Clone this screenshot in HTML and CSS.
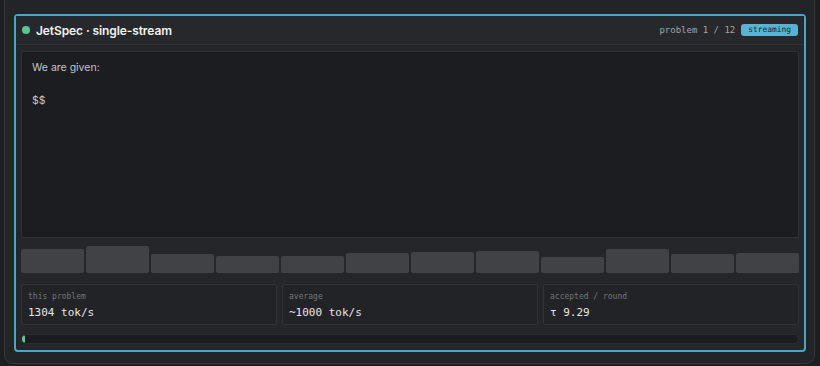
FILE: index.html
```html
<!DOCTYPE html>
<html>
<head>
<meta charset="utf-8">
<link rel="stylesheet" href="styles.css">
</head>
<body>
<div class="panel">
  <div class="card">
    <div class="card-head">
      <div class="title-wrap">
        <span class="dot"></span>
        <span class="title">JetSpec · single-stream</span>
      </div>
      <div class="meta">
        <span class="counter">problem 1 / 12</span>
        <span class="badge">streaming</span>
      </div>
    </div>
    <div class="card-body">
      <div class="output">We are given:

$$</div>
      <div class="bars">
        <div class="bar" style="height:24px"></div>
        <div class="bar" style="height:27px"></div>
        <div class="bar" style="height:19px"></div>
        <div class="bar" style="height:17px"></div>
        <div class="bar" style="height:17px"></div>
        <div class="bar" style="height:20px"></div>
        <div class="bar" style="height:21px"></div>
        <div class="bar" style="height:22px"></div>
        <div class="bar" style="height:16px"></div>
        <div class="bar" style="height:24px"></div>
        <div class="bar" style="height:19px"></div>
        <div class="bar" style="height:20px"></div>
      </div>
      <div class="stats">
        <div class="stat">
          <div class="stat-label">this problem</div>
          <div class="stat-value">1304 tok/s</div>
        </div>
        <div class="stat">
          <div class="stat-label">average</div>
          <div class="stat-value">~1000 tok/s</div>
        </div>
        <div class="stat">
          <div class="stat-label">accepted / round</div>
          <div class="stat-value">τ 9.29</div>
        </div>
      </div>
      <div class="progress"><div class="progress-fill" style="width:0.3%"></div></div>
    </div>
  </div>
</div>
</body>
</html>
```
FILE: styles.css
```css
* { box-sizing: border-box; }
html, body { margin: 0; padding: 0; }
body {
  background: #1d1e21;
  width: 820px;
  height: 366px;
  overflow: hidden;
  font-family: Inter, "Liberation Sans", sans-serif;
}
.panel {
  margin: -10px 5px 0 4px;
  background: #232428;
  border: 1px solid #37383c;
  border-radius: 9px;
  padding: 23px 8px 11px 9px;
}
.card {
  background: #25262a;
  border: 2px solid #4aa6c9;
  border-radius: 4px;
  display: flex;
  flex-direction: column;
}
.card-head {
  height: 29px;
  background: #27282c;
  border-bottom: 1px solid #323337;
  display: flex;
  align-items: center;
  justify-content: space-between;
  padding: 0 6px 0 6px;
}
.title-wrap { display: flex; align-items: center; gap: 6px; }
.dot {
  width: 8px; height: 8px; border-radius: 50%;
  background: #5cc592;
}
.title {
  color: #f2f2f2;
  font-weight: 600;
  font-size: 12px;
  letter-spacing: -0.1px;
}
.meta { display: flex; align-items: center; gap: 6px; }
.counter {
  font-family: "DejaVu Sans Mono", monospace;
  font-size: 9px;
  color: #a3a4a7;
}
.badge {
  font-family: "DejaVu Sans Mono", monospace;
  font-size: 7.9px;
  color: #15232b;
  background: #58b3d5;
  border-radius: 3px;
  height: 12px;
  line-height: 12px;
  padding: 0 7px;
}
.card-body {
  padding: 6px 5px 6px 5px;
  display: flex;
  flex-direction: column;
}
.output {
  height: 187px;
  background: #1c1d20;
  border: 1px solid #2f3034;
  border-radius: 2px;
  padding: 8px 10px;
  white-space: pre-wrap;
  color: #c4c4c6;
  font-size: 10.5px;
  line-height: 16.5px;
}
.bars {
  margin-top: 7px;
  height: 28px;
  display: flex;
  align-items: flex-end;
  gap: 2px;
}
.bar {
  flex: 1;
  background: #414245;
  border-radius: 2px;
}
.stats {
  margin-top: 11px;
  display: grid;
  grid-template-columns: 1fr 1fr 1fr;
  gap: 5px;
}
.stat {
  height: 41px;
  background: #222327;
  border: 1px solid #313236;
  border-radius: 2px;
  padding: 7px 6px 0 6px;
  font-family: "DejaVu Sans Mono", monospace;
}
.stat-label {
  font-size: 8px;
  color: #737478;
  line-height: 10px;
}
.stat-value {
  margin-top: 4px;
  font-size: 11px;
  color: #e6e6e8;
  line-height: 14px;
}
.progress {
  margin-top: 9px;
  height: 10px;
  background: #1b1c1f;
  border: 1px solid #2c2d31;
  border-radius: 5px;
  overflow: hidden;
}
.progress-fill {
  height: 100%;
  background: #5cc592;
  border-radius: 4px;
  min-width: 3px;
}
```
